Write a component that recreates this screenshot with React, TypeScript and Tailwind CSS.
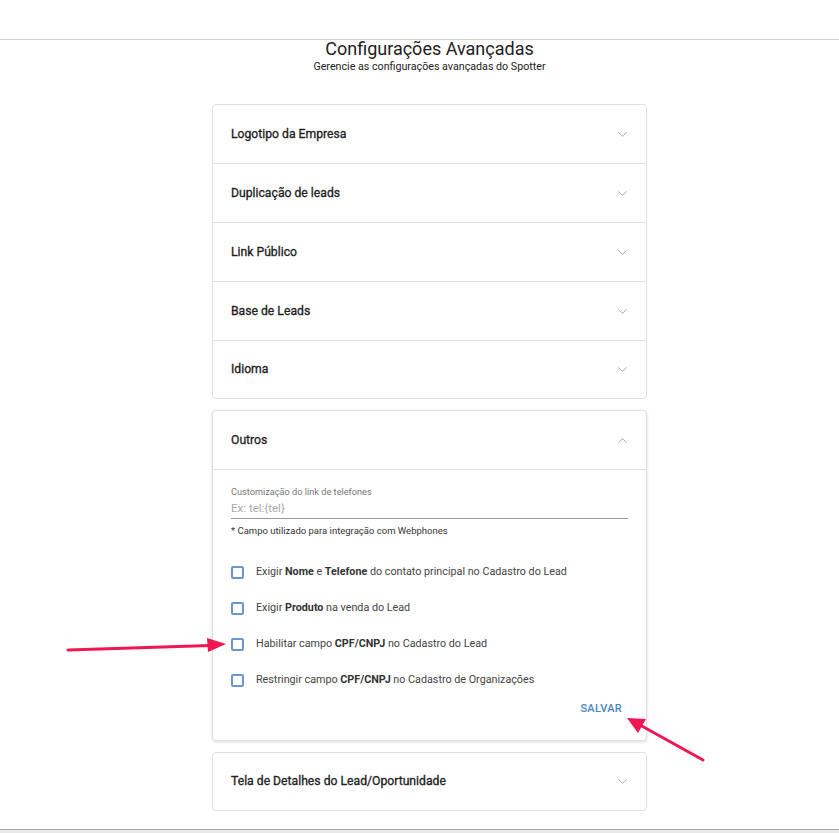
import { ChevronDown, ChevronUp } from "lucide-react";

const collapsed = ["Logotipo da Empresa", "Duplicação de leads", "Link Público", "Base de Leads", "Idioma"];

function Row({ title, open, last }: { title: string; open?: boolean; last?: boolean }) {
  return (
    <div
      className={`flex items-center justify-between pl-[18px] pr-[16px] ${last ? "h-[57px]" : "h-[59px] border-b border-[#e0e0e0]"}`}
    >
      <span className="text-[12.2px] font-normal text-[#222] [-webkit-text-stroke:0.3px_#222]">{title}</span>
      {open ? (
        <ChevronUp className="h-[15px] w-[15px] text-[#a0a0a0]" strokeWidth={1.5} />
      ) : (
        <ChevronDown className="h-[15px] w-[15px] text-[#a0a0a0]" strokeWidth={1.5} />
      )}
    </div>
  );
}

function Check({ children }: { children: React.ReactNode }) {
  return (
    <label className="flex h-[36px] items-center gap-[12px]">
      <span className="h-[13px] w-[13px] rounded-[2px] border-2 border-[#6b97cf]" />
      <span className="text-[10.75px] text-[#444]">{children}</span>
    </label>
  );
}

export default function App() {
  return (
    <div className="relative h-[833px] overflow-hidden bg-white" style={{ fontFamily: "Roboto, 'Liberation Sans', sans-serif" }}>
      <header className="h-[40px] border-b border-[#cfcfcf]" />

      <div className="flex flex-col items-center pl-[20px]">
        <h1 className="mt-[-3px] text-[18px] leading-[24px] text-[#222]">Configurações Avançadas</h1>
        <p className="text-[10.7px] leading-[12px] text-[#222]">Gerencie as configurações avançadas do Spotter</p>

        <div className="mt-[31px] w-[435px] rounded-[4px] border border-[#e0e0e0]">
          {collapsed.map((t, i) => (
            <Row key={t} title={t} last={i === collapsed.length - 1} />
          ))}
        </div>

        <div className="mt-[11px] w-[435px] rounded-[4px] border border-[#e0e0e0] shadow-[0_1px_3px_rgba(0,0,0,0.15)]">
          <Row title="Outros" open />
          <div className="px-[18px] pb-[22px] pt-[16px]">
            <div className="text-[9.2px] leading-[12px] text-[#777]">Customização do link de telefones</div>
            <div className="mt-[3px] w-[397px] border-b border-[#999] pb-[3px] text-[11.5px] leading-[14px] text-[#aaa]">
              Ex: tel:{"{tel}"}
            </div>
            <div className="mt-[6px] text-[9.5px] leading-[12px] text-[#333]">* Campo utilizado para integração com Webphones</div>

            <div className="mt-[17px] flex flex-col">
              <Check>
                Exigir <b className="font-bold text-[#333]">Nome</b> e <b className="font-bold text-[#333]">Telefone</b> do contato
                principal no Cadastro do Lead
              </Check>
              <Check>
                Exigir <b className="font-bold text-[#333]">Produto</b> na venda do Lead
              </Check>
              <Check>
                Habilitar campo <b className="font-bold text-[#333]">CPF/CNPJ</b> no Cadastro do Lead
              </Check>
              <Check>
                Restringir campo <b className="font-bold text-[#333]">CPF/CNPJ</b> no Cadastro de Organizações
              </Check>
            </div>

            <div className="mt-[3px] flex justify-end pr-[6px]">
              <button className="text-[11px] font-medium tracking-[0.3px] text-[#4a85c6]">SALVAR</button>
            </div>
          </div>
        </div>

        <div className="mt-[11px] w-[435px] rounded-[4px] border border-[#e0e0e0]">
          <Row title="Tela de Detalhes do Lead/Oportunidade" last />
        </div>
      </div>

      <div className="absolute bottom-0 left-0 right-0 h-[4px] border-t border-[#a8a8a8] bg-[#e8e8e8]" />

      <svg className="pointer-events-none absolute left-0 top-0" width="839" height="833">
        <line x1="68" y1="650" x2="210" y2="645.5" stroke="#ef1654" strokeWidth="3" strokeLinecap="round" />
        <polygon points="226,644 207,638 208,652" fill="#ef1654" />
        <line x1="703" y1="760" x2="640" y2="725" stroke="#ef1654" strokeWidth="3" strokeLinecap="round" />
        <polygon points="627,718 646,719 638,733" fill="#ef1654" />
      </svg>
    </div>
  );
}
